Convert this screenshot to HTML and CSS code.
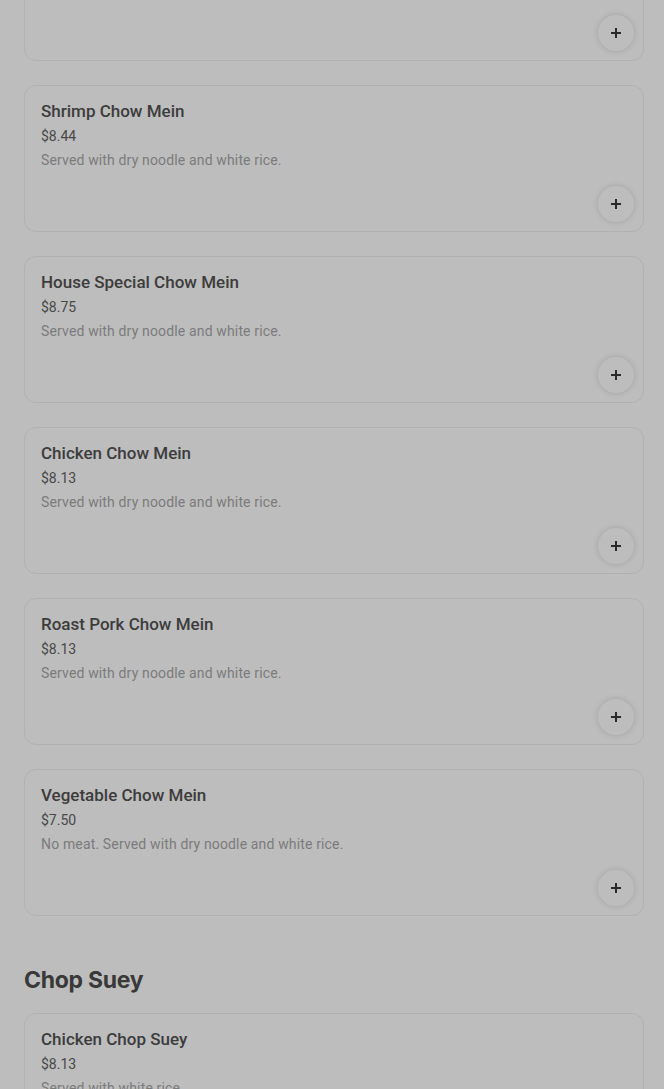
FILE: index.html
```html
<!DOCTYPE html>
<html lang="en">
<head>
<meta charset="utf-8">
<title>Menu</title>
<link rel="stylesheet" href="styles.css">
</head>
<body>
<main class="menu">
  <section class="section first">
    <div class="list">
      <article class="card">
        <div class="info">
          <h3 class="name">Beef Chow Mein</h3>
          <div class="price">$8.44</div>
          <p class="desc">Served with dry noodle and white rice.</p>
        </div>
        <div class="actions"><button class="add" aria-label="Add"><svg viewBox="0 0 12 12" width="12" height="12"><path d="M6 1v10M1 6h10" stroke="currentColor" stroke-width="2" fill="none"/></svg></button></div>
      </article>
      <article class="card">
        <div class="info">
          <h3 class="name">Shrimp Chow Mein</h3>
          <div class="price">$8.44</div>
          <p class="desc">Served with dry noodle and white rice.</p>
        </div>
        <div class="actions"><button class="add" aria-label="Add"><svg viewBox="0 0 12 12" width="12" height="12"><path d="M6 1v10M1 6h10" stroke="currentColor" stroke-width="2" fill="none"/></svg></button></div>
      </article>
      <article class="card">
        <div class="info">
          <h3 class="name">House Special Chow Mein</h3>
          <div class="price">$8.75</div>
          <p class="desc">Served with dry noodle and white rice.</p>
        </div>
        <div class="actions"><button class="add" aria-label="Add"><svg viewBox="0 0 12 12" width="12" height="12"><path d="M6 1v10M1 6h10" stroke="currentColor" stroke-width="2" fill="none"/></svg></button></div>
      </article>
      <article class="card">
        <div class="info">
          <h3 class="name">Chicken Chow Mein</h3>
          <div class="price">$8.13</div>
          <p class="desc">Served with dry noodle and white rice.</p>
        </div>
        <div class="actions"><button class="add" aria-label="Add"><svg viewBox="0 0 12 12" width="12" height="12"><path d="M6 1v10M1 6h10" stroke="currentColor" stroke-width="2" fill="none"/></svg></button></div>
      </article>
      <article class="card">
        <div class="info">
          <h3 class="name">Roast Pork Chow Mein</h3>
          <div class="price">$8.13</div>
          <p class="desc">Served with dry noodle and white rice.</p>
        </div>
        <div class="actions"><button class="add" aria-label="Add"><svg viewBox="0 0 12 12" width="12" height="12"><path d="M6 1v10M1 6h10" stroke="currentColor" stroke-width="2" fill="none"/></svg></button></div>
      </article>
      <article class="card">
        <div class="info">
          <h3 class="name">Vegetable Chow Mein</h3>
          <div class="price">$7.50</div>
          <p class="desc">No meat. Served with dry noodle and white rice.</p>
        </div>
        <div class="actions"><button class="add" aria-label="Add"><svg viewBox="0 0 12 12" width="12" height="12"><path d="M6 1v10M1 6h10" stroke="currentColor" stroke-width="2" fill="none"/></svg></button></div>
      </article>
    </div>
  </section>
  <section class="section">
    <h2 class="section-title">Chop Suey</h2>
    <div class="list">
      <article class="card">
        <div class="info">
          <h3 class="name">Chicken Chop Suey</h3>
          <div class="price">$8.13</div>
          <p class="desc">Served with white rice.</p>
        </div>
        <div class="actions"><button class="add" aria-label="Add"><svg viewBox="0 0 12 12" width="12" height="12"><path d="M6 1v10M1 6h10" stroke="currentColor" stroke-width="2" fill="none"/></svg></button></div>
      </article>
    </div>
  </section>
</main>
</body>
</html>
```
FILE: styles.css
```css
html, body {
  margin: 0;
  padding: 0;
  background: #bdbdbd;
}
body {
  font-family: Roboto, "Noto Sans", "Liberation Sans", sans-serif;
  color: #3a3a3a;
  overflow: hidden;
}
.menu {
  padding: 0 20px 0 24px;
}
.section.first {
  margin-top: -86px;
}
.section-title {
  margin: 50px 0 19px;
  font-family: Inter, "Noto Sans", sans-serif;
  font-size: 23px;
  line-height: 28px;
  font-weight: 700;
  letter-spacing: -0.3px;
  color: #393939;
}
.list {
  display: flex;
  flex-direction: column;
  gap: 24px;
}
.card {
  border: 1px solid #b1b1b1;
  border-radius: 12px;
  padding: 15px 9px 9px 16px;
  display: flex;
  flex-direction: column;
  gap: 16px;
}
.info {
  display: flex;
  flex-direction: column;
  gap: 4px;
}
.name {
  margin: 0 0 1px;
  font-size: 17px;
  line-height: 20px;
  font-weight: 500;
  color: #3c3c3c;
}
.price {
  font-size: 14px;
  line-height: 20px;
  color: #484848;
}
.desc {
  margin: 0;
  font-size: 14px;
  line-height: 20px;
  letter-spacing: 0.15px;
  color: #7b7b7b;
}
.actions {
  display: flex;
  justify-content: flex-end;
}
.add {
  width: 36px;
  height: 36px;
  border-radius: 50%;
  border: none;
  padding: 0;
  background: #bdbdbd;
  color: #2a2a2a;
  box-shadow: 0 0 6px rgba(0, 0, 0, 0.14);
  display: flex;
  align-items: center;
  justify-content: center;
}
.add svg {
  display: block;
}
```
